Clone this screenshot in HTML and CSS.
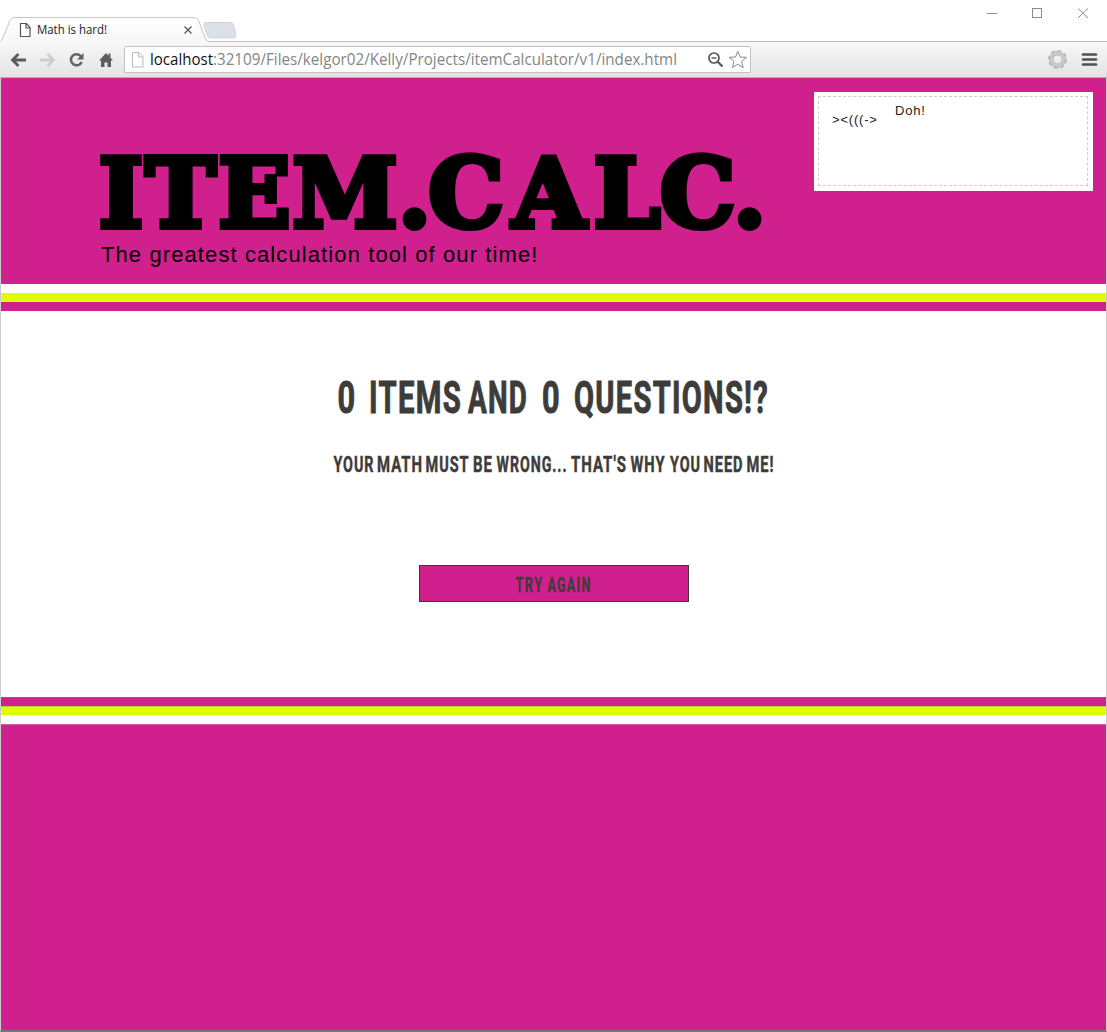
FILE: index.html
```html
<!DOCTYPE html>
<html lang="en">
<head>
<meta charset="utf-8">
<title>Math is hard!</title>
<link rel="stylesheet" href="styles.css">
</head>
<body>
<div class="window">
  <header class="tabstrip">
    <svg class="tabs" width="260" height="42" viewBox="0 0 260 42">
      <defs>
        <linearGradient id="tabfill" x1="0" y1="0" x2="0" y2="1"><stop offset="0" stop-color="#fff"/><stop offset="1" stop-color="#f7f7f7"/></linearGradient>
      </defs>
      <path d="M206 22.500h24q3 0 4 3l2 9q.5 3.500-3 3.500h-22q-3 0-4-3l-3-9q-1-3.500 2-3.500z" fill="#dbe0e8" stroke="#d3d7dd"/>
      <path d="M0 42V41.500q2-1 3-4L10 20.500q1.500-3 5-3H193q4 0 5.500 3l6.500 17q1.500 4 4 4V42z" fill="url(#tabfill)"/>
      <path d="M0 41.500q2-1 3-4L10 20.500q1.500-3 5-3H193q4 0 5.500 3l6.500 17q1.500 4 4 4H260" fill="none" stroke="#c4c4c4"/>
      <path d="M20.500 23.500h6l3.500 4v9h-9.500zM26 23.500v4.500h4" fill="#fff" stroke="#555" stroke-width="1.200"/>
      <text class="tab-title" x="37" y="34" textLength="70" lengthAdjust="spacingAndGlyphs">Math is hard!</text>
      <path d="M184.500 26.500l7 7m0-7l-7 7" stroke="#5a5a5a" stroke-width="1.400"/>
    </svg>
    <svg class="controls" width="147" height="41" viewBox="960 0 147 41" fill="none" stroke="#8c8c8c">
      <path d="M987 13.500h10"/><rect x="1032.500" y="8.500" width="9" height="9"/><path d="M1078 8.500l10 9.500m0-9.500l-10 9.500"/>
    </svg>
  </header>
  <nav class="toolbar">
    <svg class="nav-icons" width="124" height="36" viewBox="0 42 124 36" fill="none">
      <path d="M26 60H13.500M18.500 54l-6 6 6 6" stroke="#5b5b5b" stroke-width="2.800"/>
      <path d="M40 60h12.500M47.500 54l6 6-6 6" stroke="#cdcdcd" stroke-width="2.800"/>
      <path d="M81 56.300a5.600 5.600 0 1 0 .7 5.700" stroke="#626262" stroke-width="2.500"/><path d="M83.500 53v6.500H77z" fill="#626262"/>
      <path d="M99 60.500l7-7.500 2.500 2.700V53.500h2v4.300l2.500 2.700h-2V67h-3.500v-4.500h-3V67H101v-6.500z" fill="#5e5e5e"/>
    </svg>
    <div class="omnibox">
      <svg width="625" height="25" viewBox="125 47 625 25" fill="none">
        <path d="M132.500 52.500h6.500l4 4V67h-10.500zM138.500 52.500v4.500h4.500" stroke="#bbb"/>
        <text class="path" x="150" y="65"><tspan class="host" textLength="63" lengthAdjust="spacingAndGlyphs">localhost</tspan><tspan x="213" textLength="464" lengthAdjust="spacingAndGlyphs">:32109/Files/kelgor02/Kelly/Projects/itemCalculator/v1/index.html</tspan></text>
        <circle cx="714" cy="58" r="5" stroke="#555" stroke-width="1.700"/><path d="M711.500 58h5" stroke="#555" stroke-width="1.400"/><path d="M717.500 61.500l5 5" stroke="#555" stroke-width="2.200"/>
        <path d="M737.800 51.300l2.300 5.700 6.300.4-4.800 4 1.600 6.200-5.400-3.400-5.300 3.400 1.500-6.200-4.800-4 6.300-.4z" stroke="#888"/>
      </svg>
    </div>
    <svg class="menu-icons" width="67" height="36" viewBox="1040 42 67 36" fill="none">
      <circle cx="1057.500" cy="59.500" r="8" stroke="#b4b4b4" stroke-width="3" stroke-dasharray="3.280 3"/>
      <circle cx="1057.500" cy="59.500" r="6.300" stroke="#b5b5b5" stroke-width="4.400"/><circle cx="1057.500" cy="59.500" r="6.300" stroke="#cacaca" stroke-width="3"/>
      <path d="M1083 54.500h13m-13 5h13m-13 5h13" stroke="#505050" stroke-width="2.700" stroke-linecap="round"/>
    </svg>
  </nav>
  <div class="page">
    <div class="banner">
      <div class="brand">
        <svg class="logo" width="670" height="92" viewBox="100 145 670 92">
          <text class="logo-text" y="227" x="121 180.500 254.500 345 414.500 466 549 627 697.500 749.500">ITEM.CALC.</text>
        </svg>
        <p class="tagline">The greatest calculation tool of our time!</p>
      </div>
      <aside class="note"><div class="note-inner"><span class="fish">&gt;&lt;(((-&gt;</span><span class="doh">Doh!</span></div></aside>
    </div>
    <div class="stripe white"></div><div class="stripe lime"></div><div class="stripe pink"></div>
    <main class="content">
      <svg class="headline" width="460" height="120" viewBox="325 370 460 120">
        <text class="big" y="413"><tspan x="337.500" textLength="19" lengthAdjust="spacingAndGlyphs">0</tspan><tspan x="369" textLength="93" lengthAdjust="spacingAndGlyphs">ITEMS</tspan><tspan x="468" textLength="60" lengthAdjust="spacingAndGlyphs">AND</tspan><tspan x="542" textLength="19" lengthAdjust="spacingAndGlyphs">0</tspan><tspan x="574" textLength="195" lengthAdjust="spacingAndGlyphs">QUESTIONS!?</tspan></text>
        <text class="small" y="472"><tspan x="333.500" textLength="41" lengthAdjust="spacingAndGlyphs">YOUR</tspan><tspan x="377" textLength="46" lengthAdjust="spacingAndGlyphs">MATH</tspan><tspan x="425.500" textLength="44" lengthAdjust="spacingAndGlyphs">MUST</tspan><tspan x="473" textLength="20" lengthAdjust="spacingAndGlyphs">BE</tspan><tspan x="496.500" textLength="71" lengthAdjust="spacingAndGlyphs">WRONG...</tspan><tspan x="571" textLength="56" lengthAdjust="spacingAndGlyphs">THAT'S</tspan><tspan x="630.500" textLength="35" lengthAdjust="spacingAndGlyphs">WHY</tspan><tspan x="670" textLength="31" lengthAdjust="spacingAndGlyphs">YOU</tspan><tspan x="703.500" textLength="40" lengthAdjust="spacingAndGlyphs">NEED</tspan><tspan x="746.500" textLength="28" lengthAdjust="spacingAndGlyphs">ME!</tspan></text>
      </svg>
      <button class="again" type="button">
        <svg width="90" height="34" viewBox="509 566 90 34">
          <text y="592"><tspan x="515.500" textLength="28" lengthAdjust="spacingAndGlyphs">TRY</tspan><tspan x="547.500" textLength="44" lengthAdjust="spacingAndGlyphs">AGAIN</tspan></text>
        </svg>
      </button>
    </main>
    <div class="stripe pink shaded"></div><div class="stripe lime shaded"></div><div class="stripe white"></div>
    <footer class="footer"></footer>
  </div>
</div>
</body>
</html>
```
FILE: styles.css
```css
* { box-sizing: border-box; }
body { margin: 0; background: #fff; font-family: "Liberation Sans", Arial, sans-serif; }
svg { display: block; flex: none; overflow: visible; }
.window { width: 1107px; height: 1032px; display: flex; flex-direction: column; overflow: hidden; }
.tabstrip { height: 42px; flex: none; display: flex; justify-content: space-between; background: linear-gradient(#bdbdbd, #bdbdbd) 0 41px / 100% 1px no-repeat; }
.tabs { background: #fff; }
.tab-title { font: 12px "Open Sans", "Noto Sans", sans-serif; fill: #222; }
.toolbar { height: 36px; flex: none; display: flex; background: linear-gradient(#f8f8f8, #e3e3e3); border-bottom: 1px solid #b0b0b0; }
.omnibox { width: 627px; height: 27px; margin-top: 4px; border: 1px solid #c2c2c2; border-radius: 2px; background: #fff; }
.path { font: 15.5px "Open Sans", "Noto Sans", sans-serif; fill: #858585; }
.host { fill: #111; }
.menu-icons { margin-left: auto; }
.page { flex: 1; min-height: 0; display: flex; flex-direction: column; border-left: 1px solid #ccc; border-right: 1px solid #ccc; border-bottom: 2px solid #777; }
.banner { height: 206px; flex: none; background: #d0208d; display: flex; justify-content: space-between; padding: 14px 13px 0 99px; }
.brand { padding-top: 53px; }
.logo-text { font: bold 95px "DejaVu Serif", serif; text-anchor: middle; fill: #000; stroke: #000; stroke-width: 6px; }
.tagline { margin: 5px 0 0 1px; font-size: 22px; line-height: 25px; letter-spacing: 1.1px; white-space: nowrap; color: #000; }
.note { width: 279px; height: 99px; padding: 4px; background: #fff; }
.note-inner { height: 90px; width: 270px; border: 1px dashed #ccc; display: flex; font-size: 13px; line-height: 15px; letter-spacing: .8px; color: #222; }
.fish { padding: 15px 0 0 13px; width: 76px; }
.doh { padding-top: 6px; }
.stripe { height: 9px; flex: none; }
.white { background: #fff; }
.lime { background: #dfff00; }
.pink { background: #d0208d; }
.shaded { border-top: 1px solid rgba(150, 120, 120, .4); }
.content { height: 386px; flex: none; display: flex; flex-direction: column; align-items: center; padding-top: 59px; }
.headline { margin-left: 3px; }
.headline text, .again text { font-family: Roboto, sans-serif; font-weight: bold; fill: #3d3c3a; stroke: #3d3c3a; stroke-width: .5px; }
.headline .big { font-size: 45px; letter-spacing: 2px; stroke-width: 1px; }
.headline .small { font-size: 22.5px; letter-spacing: 1.5px; }
.again { width: 270px; height: 37px; margin: 75px 0 0 1px; padding: 0; border: 1px solid #45343f; background: #d0208d; display: flex; justify-content: center; }
.again text { font-size: 20px; letter-spacing: 2px; stroke-width: .3px; }
.footer { flex: 1; background: #d0208d; border-top: 1px solid #d55ba5; }
```
